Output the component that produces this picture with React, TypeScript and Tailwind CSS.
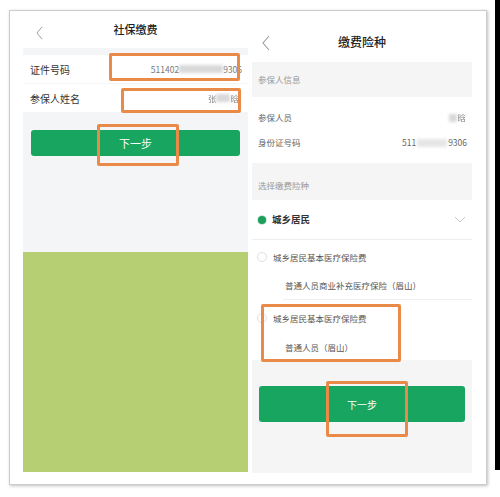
import React from "react";

const font = { fontFamily: '"Noto Sans CJK SC", "Noto Sans", sans-serif' };

function BackIcon({ className }: { className?: string }) {
  return (
    <svg viewBox="0 0 8 16" className={className} fill="none" stroke="#9a9a9a" strokeWidth="1.1">
      <path d="M7 1 L1 8 L7 15" />
    </svg>
  );
}

function Blur({ w }: { w: number }) {
  return <span className="inline-block h-[8px] bg-[#d9d9d9] blur-[1.5px]" style={{ width: w }} />;
}

// annotation boxes drawn over the screenshot
const marks = [
  "left-[109px] top-[53px] w-[131px] h-[28px]",
  "left-[121px] top-[88px] w-[120px] h-[25px]",
  "left-[97px] top-[124px] w-[82px] h-[42px]",
  "left-[261px] top-[304px] w-[140px] h-[58px]",
  "left-[326px] top-[381px] w-[82px] h-[56px]",
];

function LeftPanel() {
  return (
    <div className="flex w-[225px] flex-col">
      <div className="relative flex h-[37px] items-center justify-center">
        <BackIcon className="absolute left-[13px] top-[15px] h-[14px] w-[7px]" />
        <span className="text-[11px] font-medium text-[#222]">社保缴费</span>
      </div>
      <div className="flex h-[204px] flex-col bg-[#f4f5f7] pt-[7px]">
        <div className="flex h-[28px] items-center justify-between bg-white pl-[7px] pr-[6px]">
          <span className="text-[10px] text-[#333]">证件号码</span>
          <span className="flex items-center text-[8.5px] text-[#777]">
            511402
            <Blur w={44} />
            9306
          </span>
        </div>
        <div className="mt-px flex h-[28px] items-center justify-between bg-white pl-[7px] pr-[9px]">
          <span className="text-[10px] text-[#333]">参保人姓名</span>
          <span className="flex items-center text-[8.5px] text-[#888]">
            <span className="blur-[0.6px]">张</span>
            <Blur w={14} />
            <span className="blur-[0.4px]">晗</span>
          </span>
        </div>
        <button className="mx-[8px] mt-[18px] flex h-[26px] items-center justify-center rounded-[3px] bg-[#17a55f] text-[11px] text-white">
          下一步
        </button>
      </div>
      <div className="h-[220px] bg-[#b6cf73]" />
    </div>
  );
}

function RightPanel() {
  return (
    <div className="flex w-[220px] flex-col pt-[11px]">
      <div className="relative flex h-[40px] items-center justify-center">
        <BackIcon className="absolute left-[10px] top-[13px] h-[16px] w-[8px]" />
        <span className="text-[12px] font-medium text-[#222]">缴费险种</span>
      </div>
      <div className="flex h-[35px] items-center bg-[#f5f5f5] pl-[6px] text-[8.5px] text-[#999]">参保人信息</div>
      <div className="flex flex-col py-[8px] text-[8.5px] text-[#666]">
        <div className="flex h-[25px] items-center justify-between pl-[6px] pr-[6px]">
          <span>参保人员</span>
          <span className="flex items-center text-[#888]">
            <Blur w={8} />
            <span className="blur-[0.4px]">晗</span>
          </span>
        </div>
        <div className="flex h-[25px] items-center justify-between pl-[6px] pr-[5px]">
          <span>身份证号码</span>
          <span className="flex items-center gap-[1px]">
            511
            <span className="inline-block h-[8px] w-[30px] bg-[#e6e6e6] blur-[1.5px]" />
            9306
          </span>
        </div>
      </div>
      <div className="flex h-[37px] items-end bg-[#f5f5f5] pb-[8px] pl-[6px] text-[8.5px] text-[#999]">选择缴费险种</div>
      <div className="flex h-[40px] items-center justify-between border-b border-[#eeeeee] pl-[6px] pr-[6px]">
        <div className="flex items-center gap-[6px]">
          <span className="h-[8px] w-[8px] rounded-full bg-[#1a9f5c] ring-1 ring-[#cfe8d9]" />
          <span className="text-[9.5px] font-bold text-[#333]">城乡居民</span>
        </div>
        <svg viewBox="0 0 12 7" className="h-[7px] w-[12px]" fill="none" stroke="#c8c8c8" strokeWidth="1">
          <path d="M1 1 L6 6 L11 1" />
        </svg>
      </div>
      <div className="flex h-[60px] flex-col pt-[10px]">
        <div className="flex h-[14px] items-center gap-[6px] pl-[5px]">
          <span className="h-[10px] w-[10px] rounded-full border border-[#e0e0e0]" />
          <span className="text-[8.5px] text-[#555]">城乡居民基本医疗保险费</span>
        </div>
        <div className="ml-[33px] mt-[14px] flex h-[14px] items-center text-[8.5px] text-[#555]">
          普通人员商业补充医疗保险（眉山）
        </div>
        <div className="ml-[31px] mt-auto border-b border-[#eeeeee]" />
      </div>
      <div className="flex h-[60px] flex-col pt-[11px]">
        <div className="flex h-[14px] items-center gap-[6px] pl-[5px]">
          <span className="h-[10px] w-[10px] rounded-full border border-[#e0e0e0]" />
          <span className="text-[8.5px] text-[#555]">城乡居民基本医疗保险费</span>
        </div>
        <div className="ml-[33px] mt-[15px] flex h-[14px] items-center text-[8.5px] text-[#555]">普通人员（眉山）</div>
      </div>
      <div className="flex h-[113px] flex-col bg-[#f5f5f5] pt-[26px]">
        <button className="mx-[7px] flex h-[36px] items-center justify-center rounded-[3px] bg-[#17a55f] text-[10px] text-white">
          下一步
        </button>
      </div>
    </div>
  );
}

export default function App() {
  return (
    <div className="relative flex h-[497px] w-[500px] bg-white" style={font}>
      <div className="ml-[9px] mt-[10px] flex h-[475px] w-[478px] gap-[4px] border border-[#cccccc] bg-white pl-[13px] shadow-[1px_1px_3px_rgba(0,0,0,0.25)]">
        <LeftPanel />
        <RightPanel />
      </div>
      <div className="ml-[8px] h-[470px] w-[5px] bg-black" />
      {marks.map((m) => (
        <div key={m} className={`absolute rounded-[2px] border-[3px] border-[#ea8a48] ${m}`} />
      ))}
    </div>
  );
}
